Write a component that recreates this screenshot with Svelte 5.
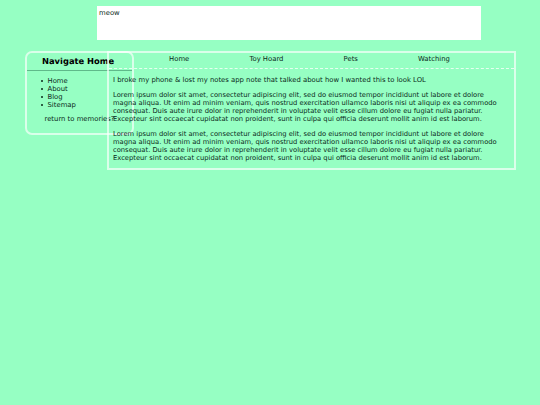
<script>
  const links = ['Home', 'About', 'Blog', 'Sitemap'];
  const tabs = ['Home', 'Toy Hoard', 'Pets', 'Watching'];
  const lorem = 'Lorem ipsum dolor sit amet, consectetur adipiscing elit, sed do eiusmod tempor incididunt ut labore et dolore magna aliqua. Ut enim ad minim veniam, quis nostrud exercitation ullamco laboris nisi ut aliquip ex ea commodo consequat. Duis aute irure dolor in reprehenderit in voluptate velit esse cillum dolore eu fugiat nulla pariatur. Excepteur sint occaecat cupidatat non proident, sunt in culpa qui officia deserunt mollit anim id est laborum.';
</script>

<div class="page">
  <header>meow</header>

  <div class="columns">
    <aside>
      <h2>Navigate Home</h2>
      <ul>
        {#each links as link}
          <li>{link}</li>
        {/each}
      </ul>
      <p class="back">return to memories?</p>
    </aside>

    <main>
      <nav>
        {#each tabs as tab}
          <span>{tab}</span>
        {/each}
      </nav>
      <div class="content">
        <p class="intro">I broke my phone &amp; lost my notes app note that talked about how I wanted this to look LOL</p>
        <p>{lorem}</p>
        <p>{lorem}</p>
      </div>
    </main>
  </div>
</div>

<style>
  :global(body) {
    background: #96ffc3;
  }

  .page {
    height: 405px;
    padding-top: 6px;
    box-sizing: border-box;
    font-family: "DejaVu Sans", sans-serif;
    font-size: 6.85px;
    line-height: 8px;
    color: #0a2a1a;
    text-rendering: geometricPrecision;
  }

  header {
    width: 384px;
    height: 34px;
    margin-left: 97px;
    padding: 3px 2px;
    box-sizing: border-box;
    background: #fff;
  }

  .columns {
    display: flex;
    align-items: flex-start;
    margin: 11px 0 0 25px;
  }

  aside {
    flex: none;
    width: 109px;
    height: 84px;
    box-sizing: border-box;
    border: 2px solid rgba(255, 255, 255, 0.65);
    border-radius: 7px;
  }

  h2 {
    margin: 0;
    height: 17px;
    border-bottom: 1px solid #5fb98a;
    padding-left: 15px;
    font-size: 8.35px;
    line-height: 17px;
    font-weight: bold;
    color: #000;
    white-space: nowrap;
  }

  ul {
    margin: 6px 0 0;
    padding-left: 13.5px;
    list-style: none;
  }

  li {
    display: flex;
    align-items: center;
    gap: 5px;
  }

  li::before {
    content: "";
    width: 2px;
    height: 2px;
    border-radius: 50%;
    background: #0a2a1a;
  }

  .back {
    margin: 6px 0 0 17.5px;
    white-space: nowrap;
  }

  main {
    flex: none;
    width: 409px;
    height: 119px;
    margin-left: -27px;
    box-sizing: border-box;
    border: 2px solid rgba(255, 255, 255, 0.65);
  }

  nav {
    display: flex;
    justify-content: space-evenly;
    height: 15px;
    padding-right: 4px;
    line-height: 13px;
    border-bottom: 1px dashed #e6fff0;
  }

  .content {
    padding: 7px 14px 0 4px;
    font-size: 6.76px;
  }

  .content p {
    margin: 0 0 7px;
  }

  .content .intro {
    font-size: 6.85px;
  }
</style>
